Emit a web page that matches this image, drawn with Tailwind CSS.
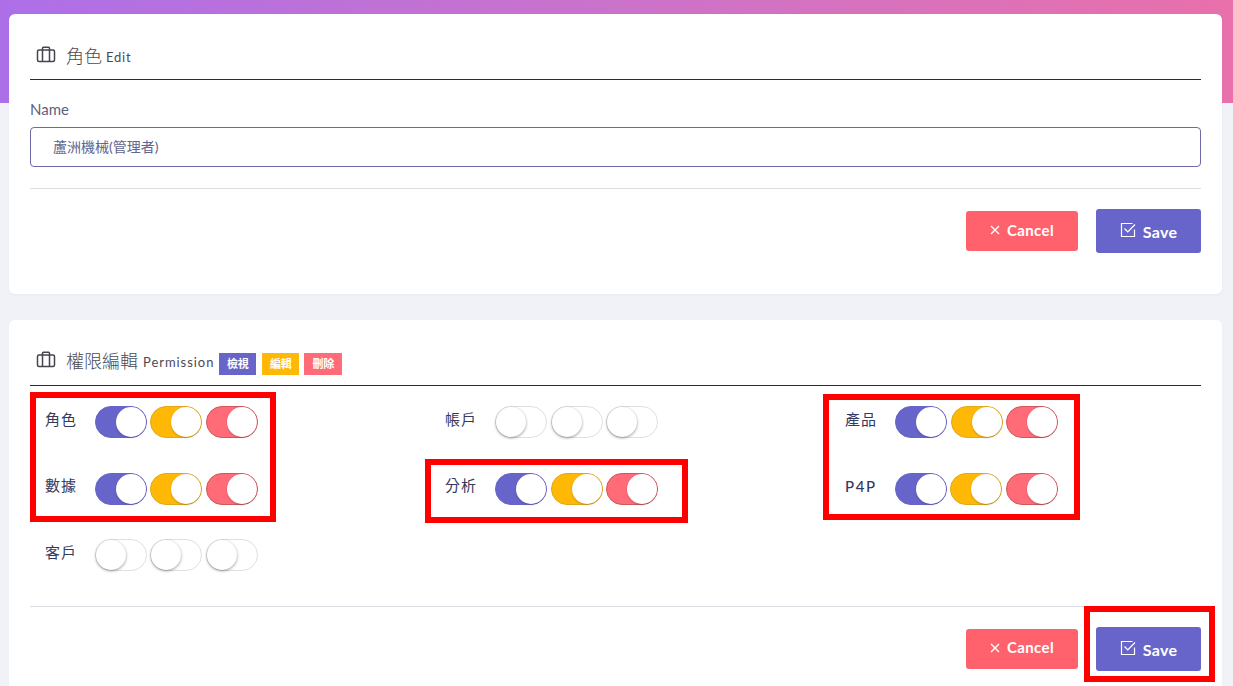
<!DOCTYPE html>
<html lang="zh-Hant">
<head>
<meta charset="utf-8">
<script src="https://cdn.jsdelivr.net/npm/@tailwindcss/browser@4"></script>
</head>
<body class="m-0 bg-[#f1f2f8] font-['Lato','Noto_Sans_CJK_TC',sans-serif] text-[#34395e]">
<div class="relative h-[686px] w-[1233px] overflow-hidden">
  <div class="absolute left-0 top-0 h-[103px] w-full bg-gradient-to-r from-[#ad6fe8] to-[#e970ab]"></div>

  <main class="relative flex flex-col gap-[26px] pl-[9px] pr-[11px] pt-[14px]">
    <section class="h-[280px] rounded-[6px] bg-white px-[21px] shadow-[0_1px_3px_rgba(50,50,93,0.05)]">
      <header class="flex h-[66px] items-end border-b border-[#2b2b33] pb-[11px] text-[#4a4a55]">
        <svg class="mb-[3px] ml-[6px] h-[20px] w-[20px]" viewBox="0 0 20 20" fill="none" stroke="#45454f" stroke-width="1.5"><rect x="1.5" y="5" width="17" height="11.5" rx="1.5"/><path d="M6.5 5V3.2a1 1 0 0 1 1-1h5a1 1 0 0 1 1 1V5M6.5 5v11.5M13.5 5v11.5"/></svg>
        <span class="ml-[10px] text-[18px] font-light leading-[24px]">角色</span>
        <span class="ml-[4px] text-[13px] leading-[22px] tracking-[0.8px]">Edit</span>
      </header>
      <label class="mt-[20px] block text-[15px] leading-[18px] text-[#5f6180]">Name</label>
      <div class="mt-[9px] flex h-[40px] items-center rounded-[4px] border border-[#6c6aa8] pb-[2px] pl-[22px] text-[14px] text-[#5f6590]">蘆洲機械(管理者)</div>
      <div class="mt-[21px] border-t border-[#dcdde3]"></div>
      <div class="mt-[20px] flex items-center justify-end gap-[18px]">
        <button class="flex h-[40px] w-[112px] items-center justify-center gap-[7px] rounded-[3px] bg-[#ff626d] pb-[2px] text-[15px] font-bold tracking-[0.4px] text-white">
          <svg class="h-[10px] w-[10px]" viewBox="0 0 10 10" stroke="white" stroke-width="1.4"><path d="M1 1l8 8M9 1l-8 8"/></svg>Cancel</button>
        <button class="flex h-[44px] w-[105px] items-center justify-center gap-[7px] rounded-[3px] bg-[#6865ca] pt-[1px] text-[16px] font-bold tracking-[0.3px] text-white">
          <svg class="mb-[4px] h-[16px] w-[16px]" viewBox="0 0 16 16" fill="none" stroke="white" stroke-width="1.2"><path d="M14.5 7.5v7h-13v-13h11"/><path d="M4.5 6.5L7.8 10 15 2.5"/></svg>Save</button>
      </div>
    </section>

    <section class="h-[400px] rounded-[6px] bg-white px-[21px]">
      <header class="flex h-[66px] items-end border-b border-[#2b2b33] pb-[12px] text-[#4a4a55]">
        <svg class="mb-[3px] ml-[6px] h-[20px] w-[20px]" viewBox="0 0 20 20" fill="none" stroke="#45454f" stroke-width="1.5"><rect x="1.5" y="5" width="17" height="11.5" rx="1.5"/><path d="M6.5 5V3.2a1 1 0 0 1 1-1h5a1 1 0 0 1 1 1V5M6.5 5v11.5M13.5 5v11.5"/></svg>
        <span class="ml-[10px] text-[18px] font-light leading-[24px]">權限編輯</span>
        <span class="ml-[5px] text-[13px] leading-[22px] tracking-[0.95px]">Permission</span>
        <span class="-mb-[2px] ml-[5px] flex h-[22px] w-[37px] items-center justify-center bg-[#6865ca] text-[11px] font-semibold text-white">檢視</span>
        <span class="-mb-[2px] ml-[6px] flex h-[22px] w-[37px] items-center justify-center bg-[#ffb806] text-[11px] font-semibold text-white">編輯</span>
        <span class="-mb-[2px] ml-[5px] flex h-[22px] w-[38px] items-center justify-center bg-[#ff6b76] text-[11px] font-semibold text-white">刪除</span>
      </header>

      <div class="mt-[20px] grid h-[166px] grid-cols-[400px_400px_371px] grid-rows-[66.5px_66.5px_32px]">
        <div class="flex items-start pl-[15px]">
          <span class="w-[50px] text-[15px] leading-[26px] tracking-[1px]">角色</span>
          <div class="flex gap-[3px]">
            <span class="relative block h-[32px] w-[52px] rounded-full border border-[#6865ca] bg-[#6865ca]"><span class="absolute right-0 top-0 h-[30px] w-[30px] rounded-full bg-white shadow-[0_1px_2px_rgba(0,0,0,0.2)]"></span></span>
            <span class="relative block h-[32px] w-[52px] rounded-full border border-[#e0a820] bg-[#ffb806]"><span class="absolute right-0 top-0 h-[30px] w-[30px] rounded-full bg-white shadow-[0_1px_2px_rgba(0,0,0,0.2)]"></span></span>
            <span class="relative ml-[1px] block h-[32px] w-[52px] rounded-full border border-[#d0565f] bg-[#ff6b76]"><span class="absolute right-0 top-0 h-[30px] w-[30px] rounded-full bg-white shadow-[0_1px_2px_rgba(0,0,0,0.2)]"></span></span>
          </div>
        </div>
        <div class="flex items-start pl-[15px]">
          <span class="w-[50px] text-[15px] leading-[26px] tracking-[1px]">帳戶</span>
          <div class="flex gap-[3px]">
            <span class="relative block h-[32px] w-[52px] rounded-full border border-[#dfdfe5] bg-white"><span class="absolute left-0 top-0 h-[30px] w-[30px] rounded-full bg-white shadow-[0_1px_3px_rgba(0,0,0,0.4)]"></span></span>
            <span class="relative ml-[1px] block h-[32px] w-[52px] rounded-full border border-[#dfdfe5] bg-white"><span class="absolute left-0 top-0 h-[30px] w-[30px] rounded-full bg-white shadow-[0_1px_3px_rgba(0,0,0,0.4)]"></span></span>
            <span class="relative block h-[32px] w-[52px] rounded-full border border-[#dfdfe5] bg-white"><span class="absolute left-0 top-0 h-[30px] w-[30px] rounded-full bg-white shadow-[0_1px_3px_rgba(0,0,0,0.4)]"></span></span>
          </div>
        </div>
        <div class="flex items-start pl-[15px]">
          <span class="w-[50px] text-[15px] leading-[26px] tracking-[1px]">產品</span>
          <div class="flex gap-[3px]">
            <span class="relative block h-[32px] w-[52px] rounded-full border border-[#6865ca] bg-[#6865ca]"><span class="absolute right-0 top-0 h-[30px] w-[30px] rounded-full bg-white shadow-[0_1px_2px_rgba(0,0,0,0.2)]"></span></span>
            <span class="relative ml-[1px] block h-[32px] w-[52px] rounded-full border border-[#e0a820] bg-[#ffb806]"><span class="absolute right-0 top-0 h-[30px] w-[30px] rounded-full bg-white shadow-[0_1px_2px_rgba(0,0,0,0.2)]"></span></span>
            <span class="relative block h-[32px] w-[52px] rounded-full border border-[#d0565f] bg-[#ff6b76]"><span class="absolute right-0 top-0 h-[30px] w-[30px] rounded-full bg-white shadow-[0_1px_2px_rgba(0,0,0,0.2)]"></span></span>
          </div>
        </div>
        <div class="flex items-start pl-[15px]">
          <span class="w-[50px] text-[15px] leading-[24px] tracking-[1px]">數據</span>
          <div class="flex gap-[3px]">
            <span class="relative block h-[32px] w-[52px] rounded-full border border-[#6865ca] bg-[#6865ca]"><span class="absolute right-0 top-0 h-[30px] w-[30px] rounded-full bg-white shadow-[0_1px_2px_rgba(0,0,0,0.2)]"></span></span>
            <span class="relative block h-[32px] w-[52px] rounded-full border border-[#e0a820] bg-[#ffb806]"><span class="absolute right-0 top-0 h-[30px] w-[30px] rounded-full bg-white shadow-[0_1px_2px_rgba(0,0,0,0.2)]"></span></span>
            <span class="relative ml-[1px] block h-[32px] w-[52px] rounded-full border border-[#d0565f] bg-[#ff6b76]"><span class="absolute right-0 top-0 h-[30px] w-[30px] rounded-full bg-white shadow-[0_1px_2px_rgba(0,0,0,0.2)]"></span></span>
          </div>
        </div>
        <div class="flex items-start pl-[15px]">
          <span class="w-[50px] text-[15px] leading-[24px] tracking-[1px]">分析</span>
          <div class="flex gap-[3px]">
            <span class="relative block h-[32px] w-[52px] rounded-full border border-[#6865ca] bg-[#6865ca]"><span class="absolute right-0 top-0 h-[30px] w-[30px] rounded-full bg-white shadow-[0_1px_2px_rgba(0,0,0,0.2)]"></span></span>
            <span class="relative ml-[1px] block h-[32px] w-[52px] rounded-full border border-[#e0a820] bg-[#ffb806]"><span class="absolute right-0 top-0 h-[30px] w-[30px] rounded-full bg-white shadow-[0_1px_2px_rgba(0,0,0,0.2)]"></span></span>
            <span class="relative block h-[32px] w-[52px] rounded-full border border-[#d0565f] bg-[#ff6b76]"><span class="absolute right-0 top-0 h-[30px] w-[30px] rounded-full bg-white shadow-[0_1px_2px_rgba(0,0,0,0.2)]"></span></span>
          </div>
        </div>
        <div class="flex items-start pl-[15px]">
          <span class="w-[50px] text-[15px] font-medium leading-[26px] tracking-[1.6px]">P4P</span>
          <div class="flex gap-[3px]">
            <span class="relative block h-[32px] w-[52px] rounded-full border border-[#6865ca] bg-[#6865ca]"><span class="absolute right-0 top-0 h-[30px] w-[30px] rounded-full bg-white shadow-[0_1px_2px_rgba(0,0,0,0.2)]"></span></span>
            <span class="relative block h-[32px] w-[52px] rounded-full border border-[#e0a820] bg-[#ffb806]"><span class="absolute right-0 top-0 h-[30px] w-[30px] rounded-full bg-white shadow-[0_1px_2px_rgba(0,0,0,0.2)]"></span></span>
            <span class="relative ml-[1px] block h-[32px] w-[52px] rounded-full border border-[#d0565f] bg-[#ff6b76]"><span class="absolute right-0 top-0 h-[30px] w-[30px] rounded-full bg-white shadow-[0_1px_2px_rgba(0,0,0,0.2)]"></span></span>
          </div>
        </div>
        <div class="flex items-start pl-[15px]">
          <span class="w-[50px] text-[15px] leading-[26px] tracking-[1px]">客戶</span>
          <div class="flex gap-[3px]">
            <span class="relative block h-[32px] w-[52px] rounded-full border border-[#dfdfe5] bg-white"><span class="absolute left-0 top-0 h-[30px] w-[30px] rounded-full bg-white shadow-[0_1px_3px_rgba(0,0,0,0.4)]"></span></span>
            <span class="relative block h-[32px] w-[52px] rounded-full border border-[#dfdfe5] bg-white"><span class="absolute left-0 top-0 h-[30px] w-[30px] rounded-full bg-white shadow-[0_1px_3px_rgba(0,0,0,0.4)]"></span></span>
            <span class="relative ml-[1px] block h-[32px] w-[52px] rounded-full border border-[#dfdfe5] bg-white"><span class="absolute left-0 top-0 h-[30px] w-[30px] rounded-full bg-white shadow-[0_1px_3px_rgba(0,0,0,0.4)]"></span></span>
          </div>
        </div>
      </div>

      <div class="mt-[34px] border-t border-[#dcdde3]"></div>
      <div class="mt-[20px] flex items-center justify-end gap-[18px]">
        <button class="flex h-[40px] w-[112px] items-center justify-center gap-[7px] rounded-[3px] bg-[#ff626d] pb-[3px] text-[15px] font-bold tracking-[0.4px] text-white">
          <svg class="h-[10px] w-[10px]" viewBox="0 0 10 10" stroke="white" stroke-width="1.4"><path d="M1 1l8 8M9 1l-8 8"/></svg>Cancel</button>
        <button class="flex h-[44px] w-[105px] items-center justify-center gap-[7px] rounded-[3px] bg-[#6865ca] pt-[1px] text-[16px] font-bold tracking-[0.3px] text-white">
          <svg class="mb-[4px] h-[16px] w-[16px]" viewBox="0 0 16 16" fill="none" stroke="white" stroke-width="1.2"><path d="M14.5 7.5v7h-13v-13h11"/><path d="M4.5 6.5L7.8 10 15 2.5"/></svg>Save</button>
      </div>
    </section>
  </main>

  <div class="absolute left-[30px] top-[392px] h-[130px] w-[246px] border-[6px] border-[#ff0000]"></div>
  <div class="absolute left-[425px] top-[459px] h-[64px] w-[263px] border-[6px] border-[#ff0000]"></div>
  <div class="absolute left-[823px] top-[394px] h-[126px] w-[257px] border-[6px] border-[#ff0000]"></div>
  <div class="absolute left-[1084px] top-[606px] h-[76px] w-[131px] border-[6px] border-[#ff0000]"></div>
</div>
</body>
</html>
